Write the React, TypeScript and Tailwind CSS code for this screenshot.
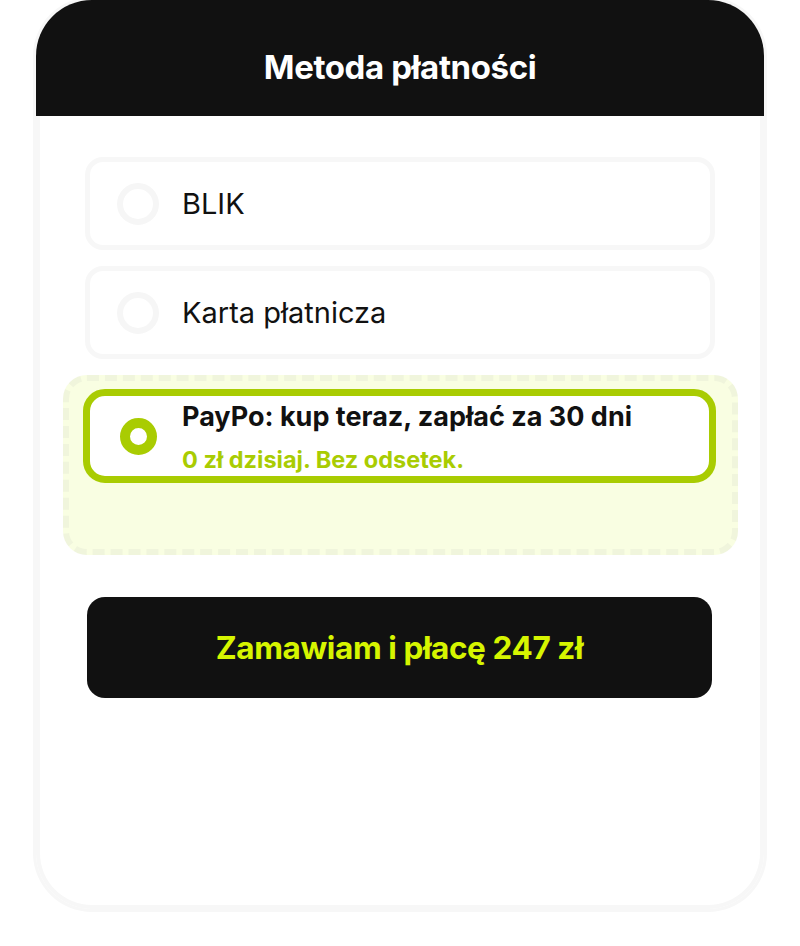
import React from "react";

const options = [
  { id: "blik", label: "BLIK" },
  { id: "card", label: "Karta płatnicza" },
];

function Radio() {
  return <span className="w-[42px] h-[42px] shrink-0 rounded-full border-[6px] border-[#f6f6f6]" />;
}

export default function App() {
  return (
    <div className="min-h-[946px] bg-white font-['Inter',sans-serif] text-[#111]">
      <div className="mx-[36px] h-[909px] rounded-[56px] overflow-hidden bg-white shadow-[0_0_0_3px_#f7f7f7,inset_0_0_0_4px_#f7f7f7]">
        <div className="h-[116px] bg-[#111] flex items-center justify-center pt-[20px]">
          <h1 className="text-white text-[33px] font-bold tracking-[-0.4px]">Metoda płatności</h1>
        </div>

        <div className="pl-[49px] pr-[49px] pt-[41px] flex flex-col">
          {options.map((o, i) => (
            <div
              key={o.id}
              className={`h-[93px] rounded-[18px] border-[5px] border-[#f7f7f7] flex items-center pl-[27px] gap-[23px] ${i > 0 ? "mt-[16px]" : ""}`}
            >
              <Radio />
              <span className="text-[29px] leading-none">{o.label}</span>
            </div>
          ))}

          <div className="mt-[16px] -ml-[22px] -mr-[23px] h-[180px] rounded-[24px] border-[6px] border-dashed border-[#f0f5dc] bg-[#f9fee2] pt-[8px] pl-[14px] pr-[16px]">
            <div className="h-[94px] rounded-[22px] border-[7px] border-[#a9cc02] bg-white flex items-center pl-[30px] gap-[25px]">
              <span className="w-[37px] h-[37px] shrink-0 rounded-full border-[10px] border-[#a9cc02] bg-white" />
              <div className="self-start flex flex-col pt-[4px]">
                <span className="text-[27px] font-bold leading-[33px]">PayPo: kup teraz, zapłać za 30 dni</span>
                <span className="mt-[13px] text-[23.5px] font-bold leading-[28px] text-[#a9cc02]">0 zł dzisiaj. Bez odsetek.</span>
              </div>
            </div>
          </div>

          <button className="mt-[42px] ml-[2px] mr-[3px] h-[101px] rounded-[18px] bg-[#111] text-[31.5px] font-bold tracking-[-0.4px] text-[#d6f500]">
            Zamawiam i płacę 247 zł
          </button>
        </div>
      </div>
    </div>
  );
}
